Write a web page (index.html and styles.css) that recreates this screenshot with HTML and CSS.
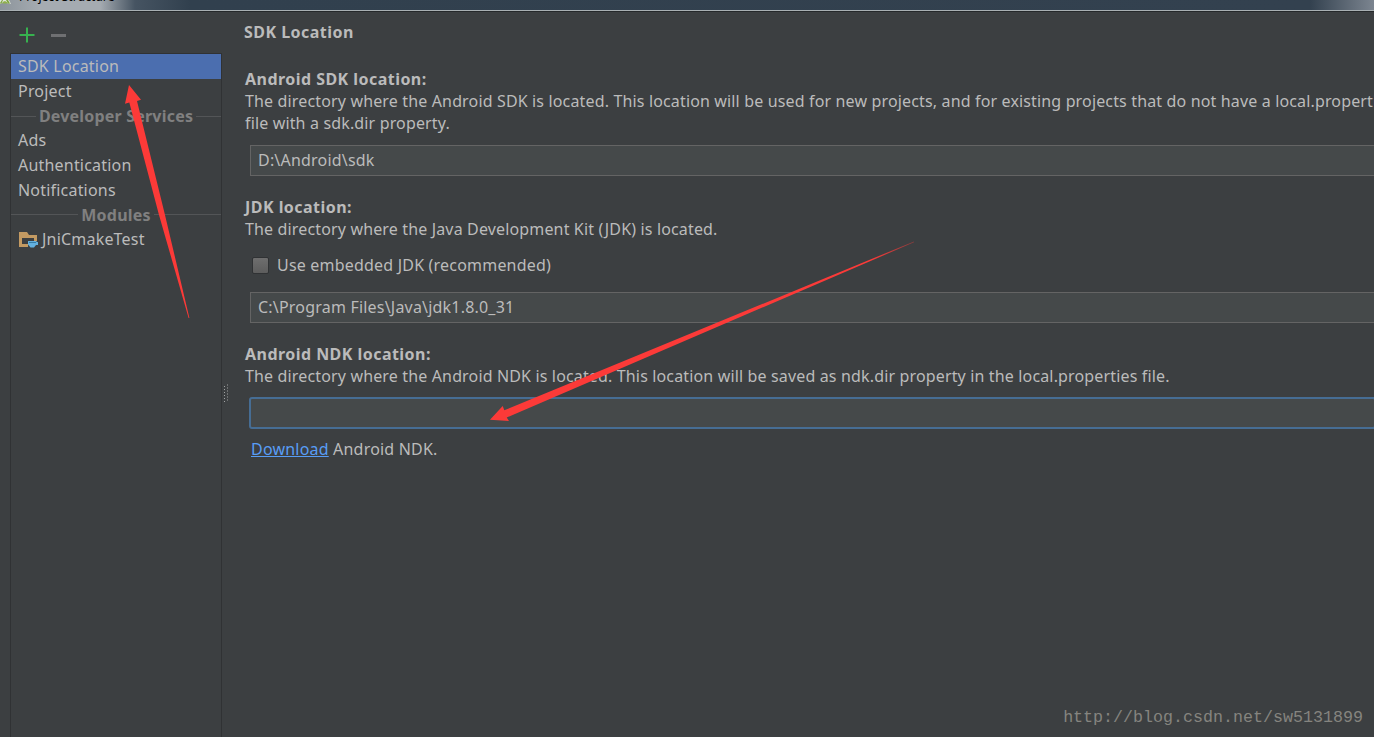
FILE: index.html
```html
<!DOCTYPE html>
<html lang="en">
<head>
    <meta charset="UTF-8">
    <meta name="viewport" content="width=device-width, initial-scale=1.0">
    <title>Project Structure</title>
    <link rel="stylesheet" href="styles.css">
</head>
<body>
    <div class="titlebar">
        <svg class="logo" width="12" height="5" viewBox="0 0 12 5">
            <path d="M0 0H9L11 4L7 3L5 2L2 3L0 4Z" fill="#dfe5da"/>
            <path d="M0 3L2 0H3L1.5 3.5H0ZM6 0H8L10 3.5H8Z" fill="#7fa63f"/>
            <path d="M2.5 2L5 1L7.5 2.5V3.5H2.5Z" fill="#8fb04c"/>
        </svg>
        <span class="titletext">Project Structure</span>
    </div>
    <div class="main">
        <div class="sidebar">
            <div class="tools">
                <svg width="16" height="16" viewBox="0 0 16 16">
                    <path d="M8 0.5V15.5M0.5 8H15.5" stroke="#37b24f" stroke-width="2"/>
                </svg>
                <svg width="16" height="16" viewBox="0 0 16 16">
                    <path d="M0 8.5H15" stroke="#6f7072" stroke-width="3"/>
                </svg>
            </div>
            <div class="list">
                <div class="item selected">SDK Location</div>
                <div class="item">Project</div>
                <div class="separator"><span>Developer Services</span></div>
                <div class="item">Ads</div>
                <div class="item">Authentication</div>
                <div class="item">Notifications</div>
                <div class="separator"><span>Modules</span></div>
                <div class="item">
                    <svg class="folder" width="20" height="18" viewBox="0 0 20 18">
                        <path d="M0 1H8L10 4H18V10H15V7H3V13H9V16H0Z" fill="#c39a62"/>
                        <path d="M9 10H17.5V11H19V14H17L15 16.5H11.5L9 13.5Z" fill="#63b1df"/>
                        <path d="M10 11.5H17" stroke="#377da6"/>
                    </svg>
                    JniCmakeTest
                </div>
            </div>
        </div>
        <div class="divider">
            <svg width="6" height="20" viewBox="0 0 6 20">
                <path d="M1.5 2V19" stroke="#a0a2a3" stroke-dasharray="1 2"/>
                <path d="M4.5 0.5V18" stroke="#a0a2a3" stroke-dasharray="1 2"/>
            </svg>
        </div>
        <div class="content">
            <h1>SDK Location</h1>
            <h2>Android SDK location:</h2>
            <p>The directory where the Android SDK is located. This location will be used for new projects, and for existing projects that do not have a local.properties<br>file with a sdk.dir property.</p>
            <div class="field">D:\Android\sdk</div>
            <h2 class="jdk">JDK location:</h2>
            <p>The directory where the Java Development Kit (JDK) is located.</p>
            <div class="check"><span class="box"></span>Use embedded JDK (recommended)</div>
            <div class="field">C:\Program Files\Java\jdk1.8.0_31</div>
            <h2 class="ndk">Android NDK location:</h2>
            <p>The directory where the Android NDK is located. This location will be saved as ndk.dir property in the local.properties file.</p>
            <div class="field focused"></div>
            <div class="download"><a href="#">Download</a> Android NDK.</div>
        </div>
    </div>
    <svg class="arrows" width="1374" height="737" viewBox="0 0 1374 737">
        <defs>
            <linearGradient id="fade" gradientUnits="userSpaceOnUse" x1="490" y1="420" x2="914" y2="242">
                <stop offset="0.9" stop-color="#fc3a38"/>
                <stop offset="1" stop-color="#fc3a38" stop-opacity="0.4"/>
            </linearGradient>
        </defs>
        <path d="M129 85L141 99.7L137 101L165 215L189.4 318H188.6L159 215L129.3 102.5L125 103.7Z" fill="#fc3a38"/>
        <path d="M490 419.7L502.7 406L504.3 410.3L914 241.5V242.3L506.7 417.5L509 421Z" fill="url(#fade)"/>
    </svg>
    <div class="watermark">http://blog.csdn.net/sw5131899</div>
</body>
</html>
```

FILE: styles.css
```css
* {
    box-sizing: border-box;
}
body {
    margin: 0;
    height: 737px;
    overflow: hidden;
    position: relative;
    background-color: #3c3f41;
    color: #bbbbbb;
    font-family: "Noto Sans", "Open Sans", sans-serif;
    font-size: 16px;
    line-height: 22px;
    letter-spacing: 0.2px;
    white-space: nowrap;
}
.titlebar {
    display: flex;
    align-items: flex-start;
    height: 12px;
    overflow: hidden;
    background: linear-gradient(90deg, #8c949b, #a5abb1 40px, #a5abb1 100px, #465462 135px, #31404e 190px, #33414f 1310px, #7c8590);
    border-bottom: 1px solid #25282a;
    box-shadow: inset 0 -1px #a9b0b3;
}
.logo {
    flex: none;
}
.titletext {
    margin: -11px 0 0 7px;
    color: #000;
    font-size: 12px;
    line-height: 16px;
    letter-spacing: 0.05px;
}
.main {
    display: flex;
    height: 725px;
}
.sidebar {
    display: flex;
    flex-direction: column;
    width: 222px;
    padding-left: 10px;
}
.tools {
    display: flex;
    gap: 16px;
    height: 41px;
    padding: 15px 0 0 9px;
}
.list {
    flex: 1;
    border: 1px solid #303234;
    border-bottom: none;
}
.item {
    display: flex;
    align-items: center;
    height: 24.7px;
    padding-left: 7px;
}
.selected {
    background-color: #4b6eaf;
}
.separator {
    display: flex;
    align-items: center;
    gap: 3px;
    height: 24.7px;
    padding-top: 1px;
    color: #808080;
    font-weight: bold;
}
.separator::before,
.separator::after {
    content: "";
    flex: 1;
    height: 1px;
    background-color: #535557;
}
.folder {
    margin: 2px 3px 0 1px;
}
.divider {
    width: 8px;
    padding: 372px 0 0 1px;
}
.divider svg {
    display: block;
}
.content {
    flex: 1;
    min-width: 0;
    padding: 9px 0 0 15px;
}
h1,
h2,
p {
    margin: 0;
    font-size: 16px;
    line-height: 22px;
}
h1,
h2 {
    letter-spacing: 0.46px;
}
h1 {
    margin: 0 0 25px -1px;
}
p {
    letter-spacing: 0.15px;
}
.field {
    height: 31px;
    margin: 11px -2px 0 5px;
    padding-left: 7px;
    border: 1px solid #646464;
    background-color: #45494a;
    line-height: 28px;
}
.jdk,
.ndk {
    margin-top: 20px;
}
.check {
    display: flex;
    align-items: center;
    gap: 8px;
    margin: 14px 0 0 7px;
}
.box {
    width: 17px;
    height: 17px;
    border: 1px solid #303234;
    border-radius: 2px;
    background: linear-gradient(#6e6e6e, #5d5d5d);
}
.check + .field {
    margin-top: 16px;
}
.focused {
    margin-top: 10px;
    margin-left: 4px;
    height: 32px;
    border: 2px solid #466d94;
    border-radius: 3px;
}
.download {
    margin: 9px 0 0 6px;
}
.download a {
    color: #589df6;
}
.arrows {
    position: absolute;
    left: 0;
    top: 0;
}
.watermark {
    position: absolute;
    right: 11px;
    bottom: 8px;
    color: #85847f;
    font-family: "Liberation Mono", monospace;
    font-size: 16.67px;
    letter-spacing: 0;
}
```
